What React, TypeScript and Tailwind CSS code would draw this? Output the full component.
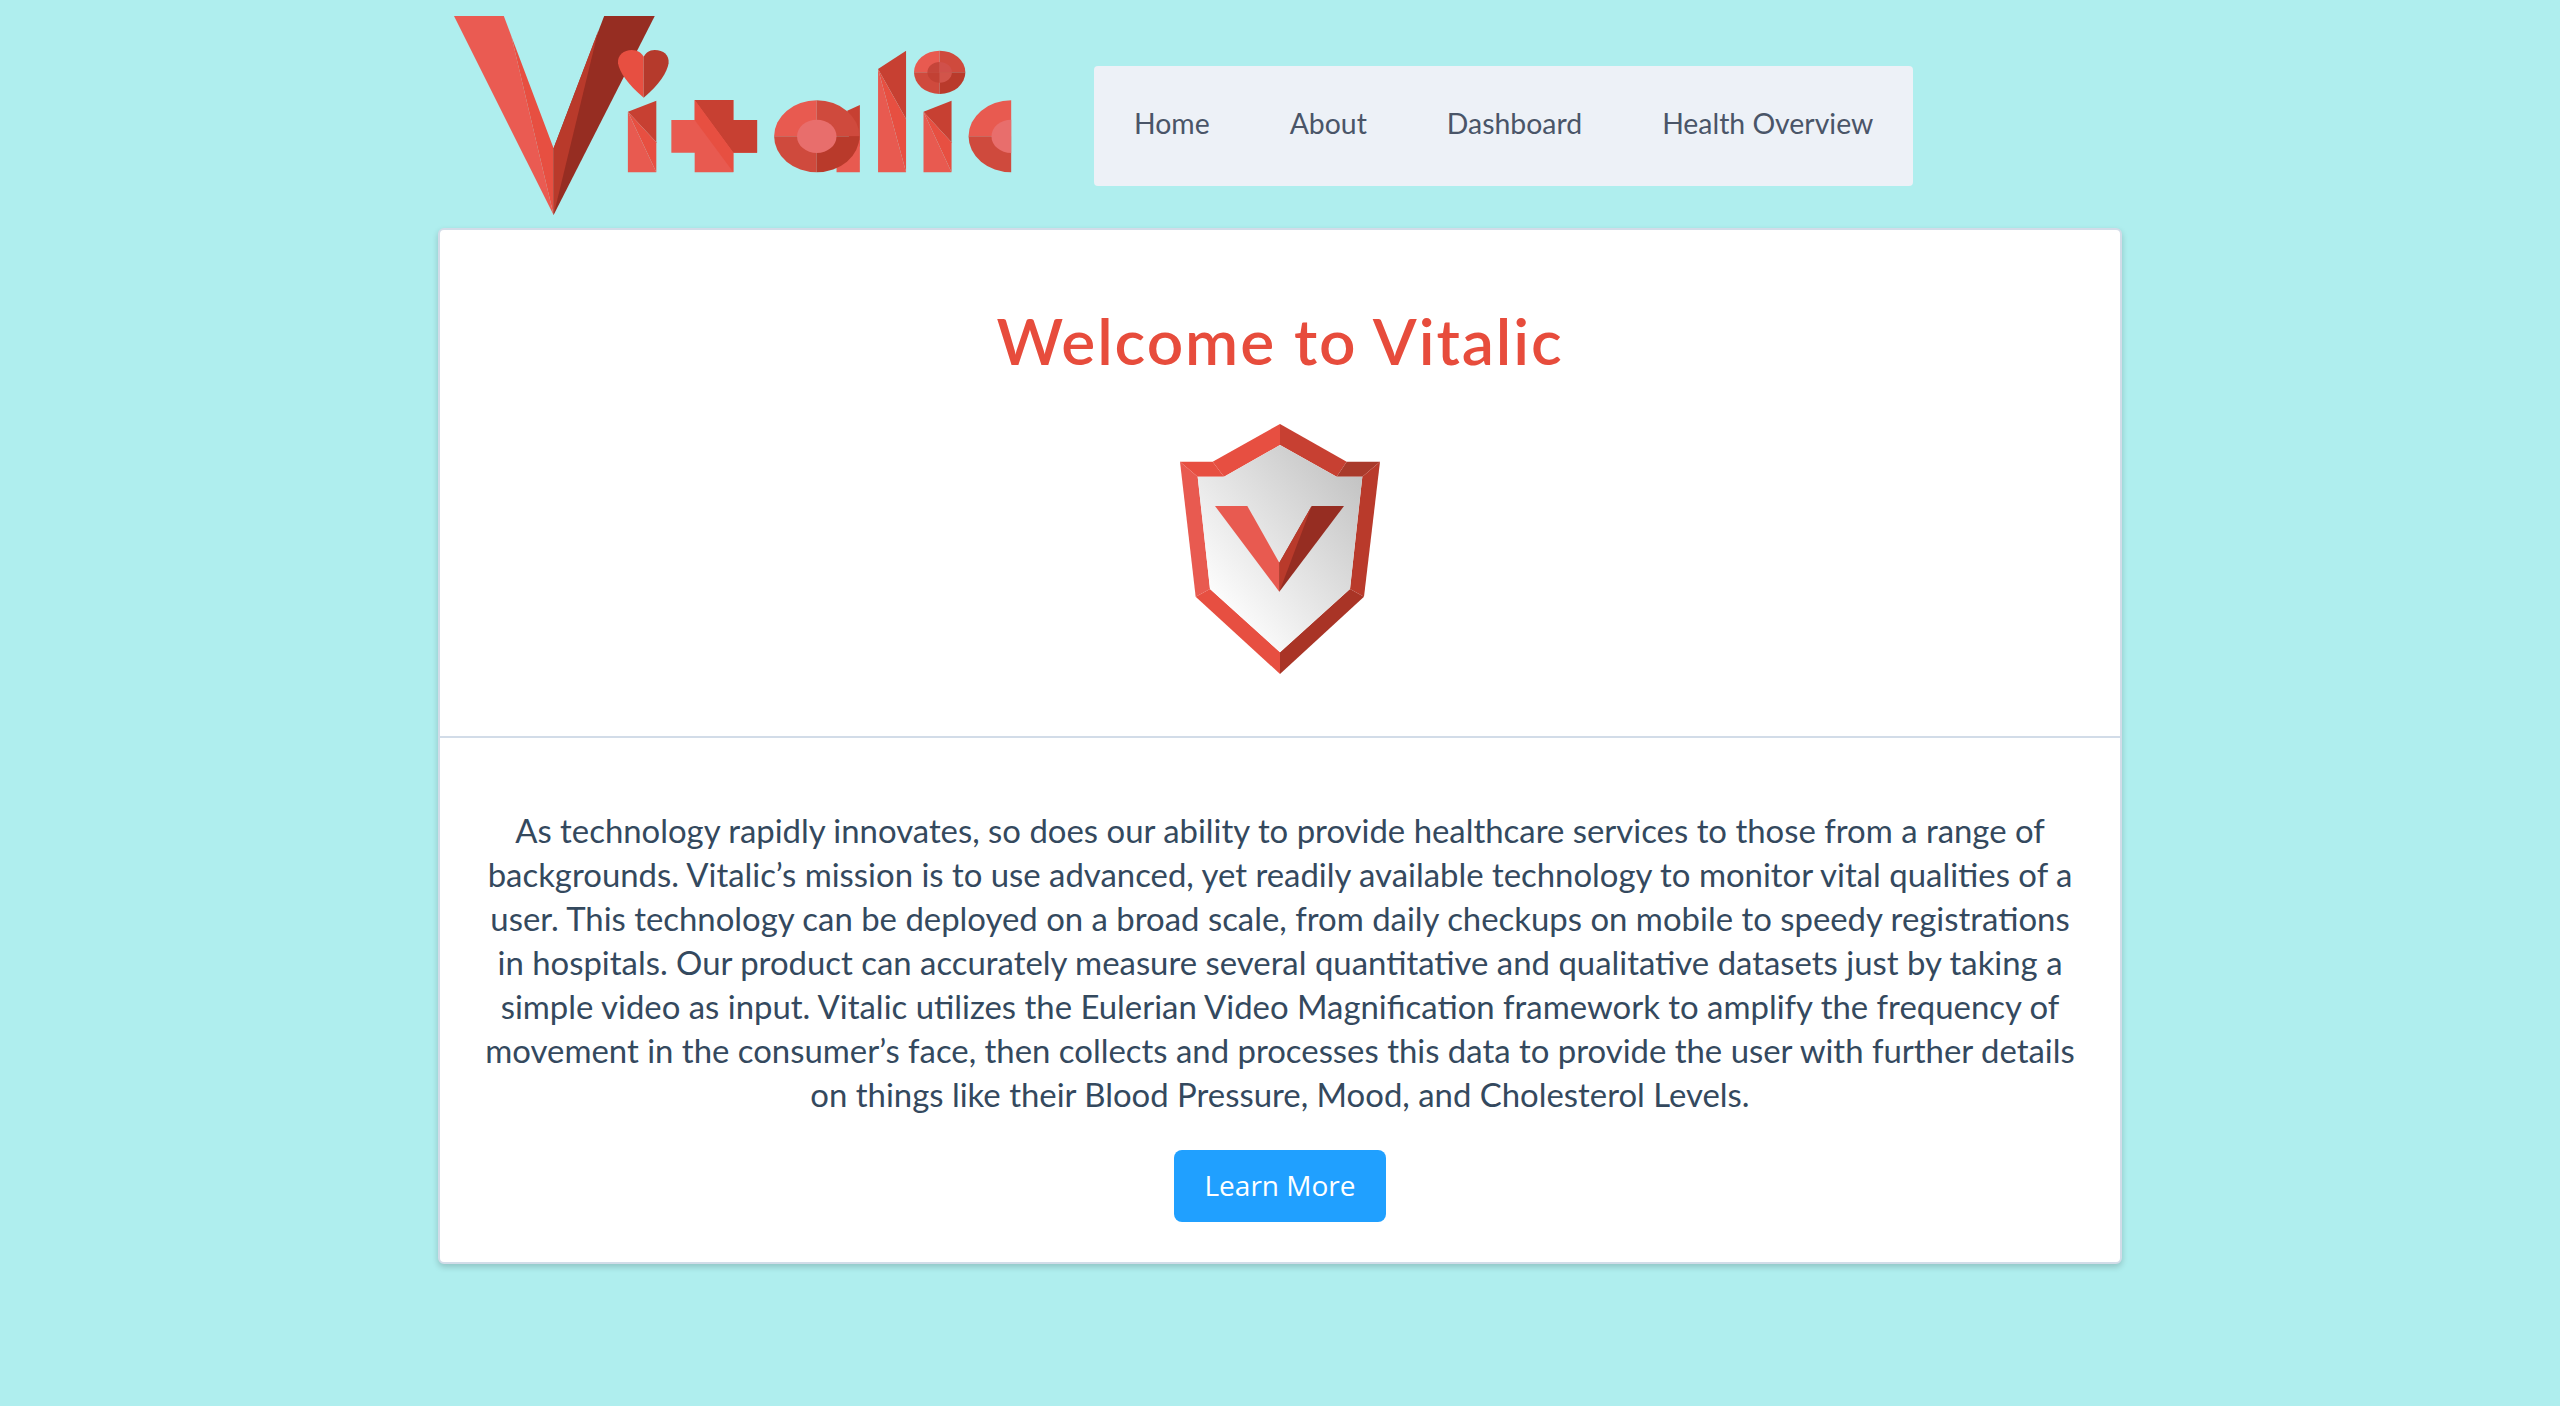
const NAV_LINKS = ['Home', 'About', 'Dashboard', 'Health Overview']

const BODY_LINES = [
  'As technology rapidly innovates, so does our ability to provide healthcare services to those from a range of',
  'backgrounds. Vitalic’s mission is to use advanced, yet readily available technology to monitor vital qualities of a',
  'user. This technology can be deployed on a broad scale, from daily checkups on mobile to speedy registrations',
  'in hospitals. Our product can accurately measure several quantitative and qualitative datasets just by taking a',
  'simple video as input. Vitalic utilizes the Eulerian Video Magnification framework to amplify the frequency of',
  'movement in the consumer’s face, then collects and processes this data to provide the user with further details',
  'on things like their Blood Pressure, Mood, and Cholesterol Levels.',
]

const LIGHT = '#e85a50'
const MID = '#e74f41'
const DARK = '#c74032'
const SOFT = '#cf4a3d'
const DEEP = '#b93a2b'
const DARKEST = '#962d22'
const PALE = '#e86e6c'

// letter stem: three facets cut from the top-left corner
function Stem({ x1, x2, top, peak, mid }: { x1: number; x2: number; top: number; peak: number; mid: number }) {
  return (
    <g>
      <polygon points={`${x1},${top} ${x2},${peak} ${x2},${mid}`} fill={DARK} />
      <polygon points={`${x1},${top} ${x2},${mid} ${x2},517`} fill={MID} />
      <polygon points={`${x1},${top} ${x2},517 ${x1},517`} fill={LIGHT} />
    </g>
  )
}

function Quarters({ cx, cy, r }: { cx: number; cy: number; r: number }) {
  return (
    <g>
      <path d={`M${cx} ${cy} L${cx - r} ${cy} A${r} ${r} 0 0 1 ${cx} ${cy - r} Z`} fill={LIGHT} />
      <path d={`M${cx} ${cy} L${cx} ${cy - r} A${r} ${r} 0 0 1 ${cx + r} ${cy} Z`} fill={SOFT} />
      <path d={`M${cx} ${cy} L${cx - r} ${cy} A${r} ${r} 0 0 0 ${cx} ${cy + r} Z`} fill={SOFT} />
      <path d={`M${cx} ${cy} L${cx} ${cy + r} A${r} ${r} 0 0 0 ${cx + r} ${cy} Z`} fill={DEEP} />
    </g>
  )
}

function Logo() {
  return (
    <svg viewBox="60 48 1412 597" preserveAspectRatio="none" className="w-[558px] h-[199px] shrink-0">
      {/* big V */}
      <polygon points="60,48 186,48 205,108 312,645" fill="#ea5b52" />
      <polygon points="186,48 312,445 312,645 205,108" fill={MID} />
      <polygon points="312,445 440,48 568,48 312,645" fill={DARKEST} />
      <polygon points="312,445 425,92 312,645" fill={DEEP} />
      {/* heart */}
      <path d="M540 293 C500 255 478 215 475 190 C473 165 490 150 510 150 C525 150 535 160 540 170 Z" fill={MID} />
      <path d="M540 293 C580 255 600 215 603 190 C605 165 590 150 568 150 C553 150 545 160 540 170 Z" fill="#b53a2c" />
      <Stem x1={500} x2={572} top={335} peak={302} mid={427} />
      {/* plus */}
      <polygon points="610,360 669,360 669,300 767,300 767,360 827,360 827,458 767,458 767,517 669,517 669,458 610,458" fill={LIGHT} />
      <polygon points="669,300 767,300 767,360 827,360 827,458 767,458" fill={DARK} />
      <polygon points="669,360 669,300 767,458 767,517" fill={MID} />
      {/* a */}
      <polygon points="1055,332 1087,315 1087,440 1060,420" fill={DARK} />
      <polygon points="1028,517 1028,480 1087,420 1087,517" fill={LIGHT} />
      <Quarters cx={978} cy={409} r={108} />
      <circle cx={978} cy={409} r={50} fill={PALE} />
      {/* l */}
      <polygon points="1133,207 1204,152 1204,357" fill={DARK} />
      <polygon points="1133,207 1204,357 1204,517" fill={MID} />
      <polygon points="1133,207 1204,517 1133,517" fill={LIGHT} />
      {/* i */}
      <Stem x1={1248} x2={1319} top={335} peak={302} mid={427} />
      <Quarters cx={1289} cy={217} r={65} />
      <path d="M1289 217 L1258 217 A31 31 0 0 1 1289 186 Z" fill="#c5453a" />
      <path d="M1289 217 L1289 186 A31 31 0 0 1 1320 217 Z" fill="#d0504a" />
      <path d="M1289 217 L1258 217 A31 31 0 0 0 1289 248 Z" fill="#c24134" />
      <path d="M1289 217 L1289 248 A31 31 0 0 0 1320 217 Z" fill="#d2544a" />
      {/* c */}
      <path d="M1470 409 L1362 409 A108 108 0 0 1 1470 301 Z" fill={LIGHT} />
      <path d="M1470 409 L1362 409 A108 108 0 0 0 1470 517 Z" fill={SOFT} />
      <path d="M1470 359 A50 50 0 0 0 1470 459 Z" fill={PALE} />
    </svg>
  )
}

function Shield() {
  return (
    <svg viewBox="90 42 600 750" className="w-[200px] h-[250px]">
      <defs>
        <linearGradient id="plate" x1="0" y1="1" x2="1" y2="0">
          <stop offset="0.15" stopColor="#ffffff" />
          <stop offset="1" stopColor="#bdbdbd" />
        </linearGradient>
      </defs>
      <polygon points="90,155 143,200 180,537 137,560" fill={LIGHT} />
      <polygon points="90,155 188,155 222,200 143,200" fill={MID} />
      <polygon points="188,155 390,42 390,105 222,200" fill={MID} />
      <polygon points="390,42 590,155 560,200 390,105" fill={DARK} />
      <polygon points="590,155 690,155 637,200 560,200" fill="#a93a2b" />
      <polygon points="690,155 642,560 600,537 637,200" fill={DEEP} />
      <polygon points="137,560 180,537 390,727 390,792" fill={MID} />
      <polygon points="642,560 600,537 390,727 390,792" fill="#a93426" />
      <polygon points="390,105 560,200 637,200 600,537 390,727 180,537 143,200 222,200" fill="url(#plate)" />
      <polygon points="195,288 292,288 388,458 388,545" fill={LIGHT} />
      <polygon points="388,458 485,288 582,288 388,545" fill={DARKEST} />
      <polygon points="388,458 485,288 388,545" fill={DEEP} />
    </svg>
  )
}

export default function App() {
  return (
    <div className="min-h-[1406px] bg-[#afeeee] text-[#2c3e50]" style={{ fontFamily: 'Lato, sans-serif' }}>
      <div className="w-[1684px] mx-auto">

        {/* Header */}
        <header className="flex items-start pl-4 pt-4 pb-[13px]">
          <Logo />
          <nav className="flex ml-[82px] mt-[50px] h-[120px] pb-[6px] items-center rounded-[4px] bg-[#edf1f7] text-[#4a5568] text-[28.4px] font-normal">
            {NAV_LINKS.map((label) => (
              <a key={label} className="px-10 whitespace-nowrap">{label}</a>
            ))}
          </nav>
        </header>

        {/* Card */}
        <main className="border-2 border-[#d2dce8] rounded-md bg-white shadow-[0_3px_6px_rgba(0,0,0,0.18)]">
          <section className="flex flex-col items-center h-[508px] pt-[72px] border-b-2 border-[#d2dce8]">
            <h1 className="text-[64px] leading-[78px] font-semibold tracking-[1.9px] text-[#e74c3c]">Welcome to Vitalic</h1>
            <div className="mt-[44px]"><Shield /></div>
          </section>
          <section className="flex flex-col items-center pt-[71px] pb-10">
            <p className="text-[32.9px] leading-[44px] font-normal text-[#34495e] text-center whitespace-nowrap">
              {BODY_LINES.map((line) => (
                <span key={line} className="block">{line}</span>
              ))}
            </p>
            <button className="mt-[33px] w-[212px] h-[72px] pb-[2px] rounded-lg bg-[#20a0ff] text-white text-[28px]" style={{ fontFamily: '"Open Sans", sans-serif' }}>
              Learn More
            </button>
          </section>
        </main>

      </div>
    </div>
  )
}
